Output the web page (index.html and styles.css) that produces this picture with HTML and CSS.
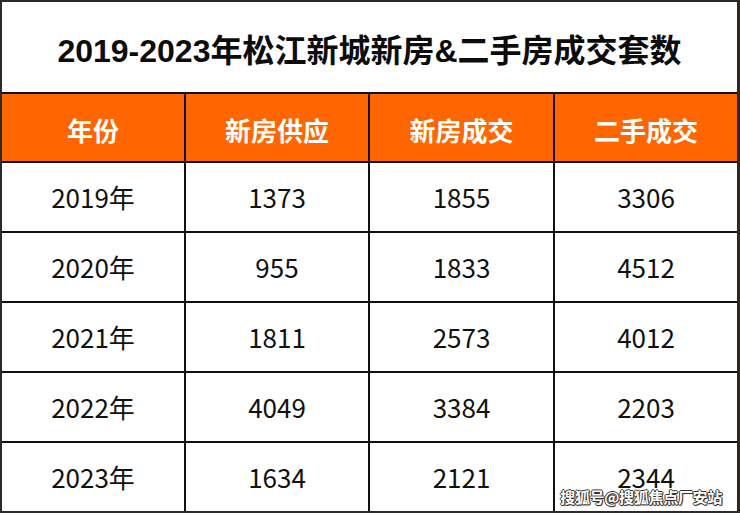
FILE: index.html
```html
<!DOCTYPE html>
<html lang="zh-CN">
<head>
<meta charset="utf-8">
<title>2019-2023年松江新城新房&amp;二手房成交套数</title>
<link rel="stylesheet" href="styles.css">
</head>
<body>
<div class="sheet">
  <div class="grid">
    <div class="cell title">2019-2023年松江新城新房&amp;二手房成交套数</div>
    <div class="cell head">年份</div>
    <div class="cell head">新房供应</div>
    <div class="cell head">新房成交</div>
    <div class="cell head">二手成交</div>

    <div class="cell data">2019年</div>
    <div class="cell data">1373</div>
    <div class="cell data">1855</div>
    <div class="cell data">3306</div>

    <div class="cell data">2020年</div>
    <div class="cell data">955</div>
    <div class="cell data">1833</div>
    <div class="cell data">4512</div>

    <div class="cell data">2021年</div>
    <div class="cell data">1811</div>
    <div class="cell data">2573</div>
    <div class="cell data">4012</div>

    <div class="cell data">2022年</div>
    <div class="cell data">4049</div>
    <div class="cell data">3384</div>
    <div class="cell data">2203</div>

    <div class="cell data">2023年</div>
    <div class="cell data">1634</div>
    <div class="cell data">2121</div>
    <div class="cell data">2344</div>
  </div>
  <div class="watermark">搜狐号@搜狐焦点厂安站</div>
</div>
</body>
</html>
```

FILE: styles.css
```css
html, body {
  margin: 0;
  padding: 0;
  background: #ffffff;
}

.sheet {
  position: relative;
  width: 740px;
  height: 513px;
  box-sizing: border-box;
  border-style: solid;
  border-color: #2e2927;
  border-width: 2px 3px 2px 2px;
  background: #111111;
}

.grid {
  display: grid;
  grid-template-columns: 182px 182px 183px 182px;
  grid-template-rows: 90px 67px 68px 68px 68px 68px 68px;
  gap: 2px;
  height: 100%;
}

.cell {
  display: flex;
  align-items: center;
  justify-content: center;
  background: #ffffff;
  color: #111111;
  font-family: "Noto Sans CJK SC", "Noto Sans", sans-serif;
}

.title {
  grid-column: 1 / 5;
  font-family: "Liberation Sans", "Noto Sans CJK SC", sans-serif;
  font-weight: 700;
  font-size: 32px;
  color: #0c0c0c;
  padding-top: 2px;
}

.head {
  background: #ff6600;
  color: #ffffff;
  font-weight: 700;
  font-size: 26px;
  padding-top: 4px;
}

.data {
  font-size: 26px;
  font-weight: 400;
  padding-bottom: 1px;
}

.watermark {
  position: absolute;
  right: 15px;
  bottom: 4px;
  font-family: "Noto Sans CJK SC", sans-serif;
  font-size: 15px;
  font-weight: 700;
  color: #ffffff;
  letter-spacing: -0.3px;
  text-shadow: 1px 0 0 #333, -1px 0 0 #333, 0 1px 0 #333, 0 -1px 0 #333, 1px 1px 1px #444;
}
```
